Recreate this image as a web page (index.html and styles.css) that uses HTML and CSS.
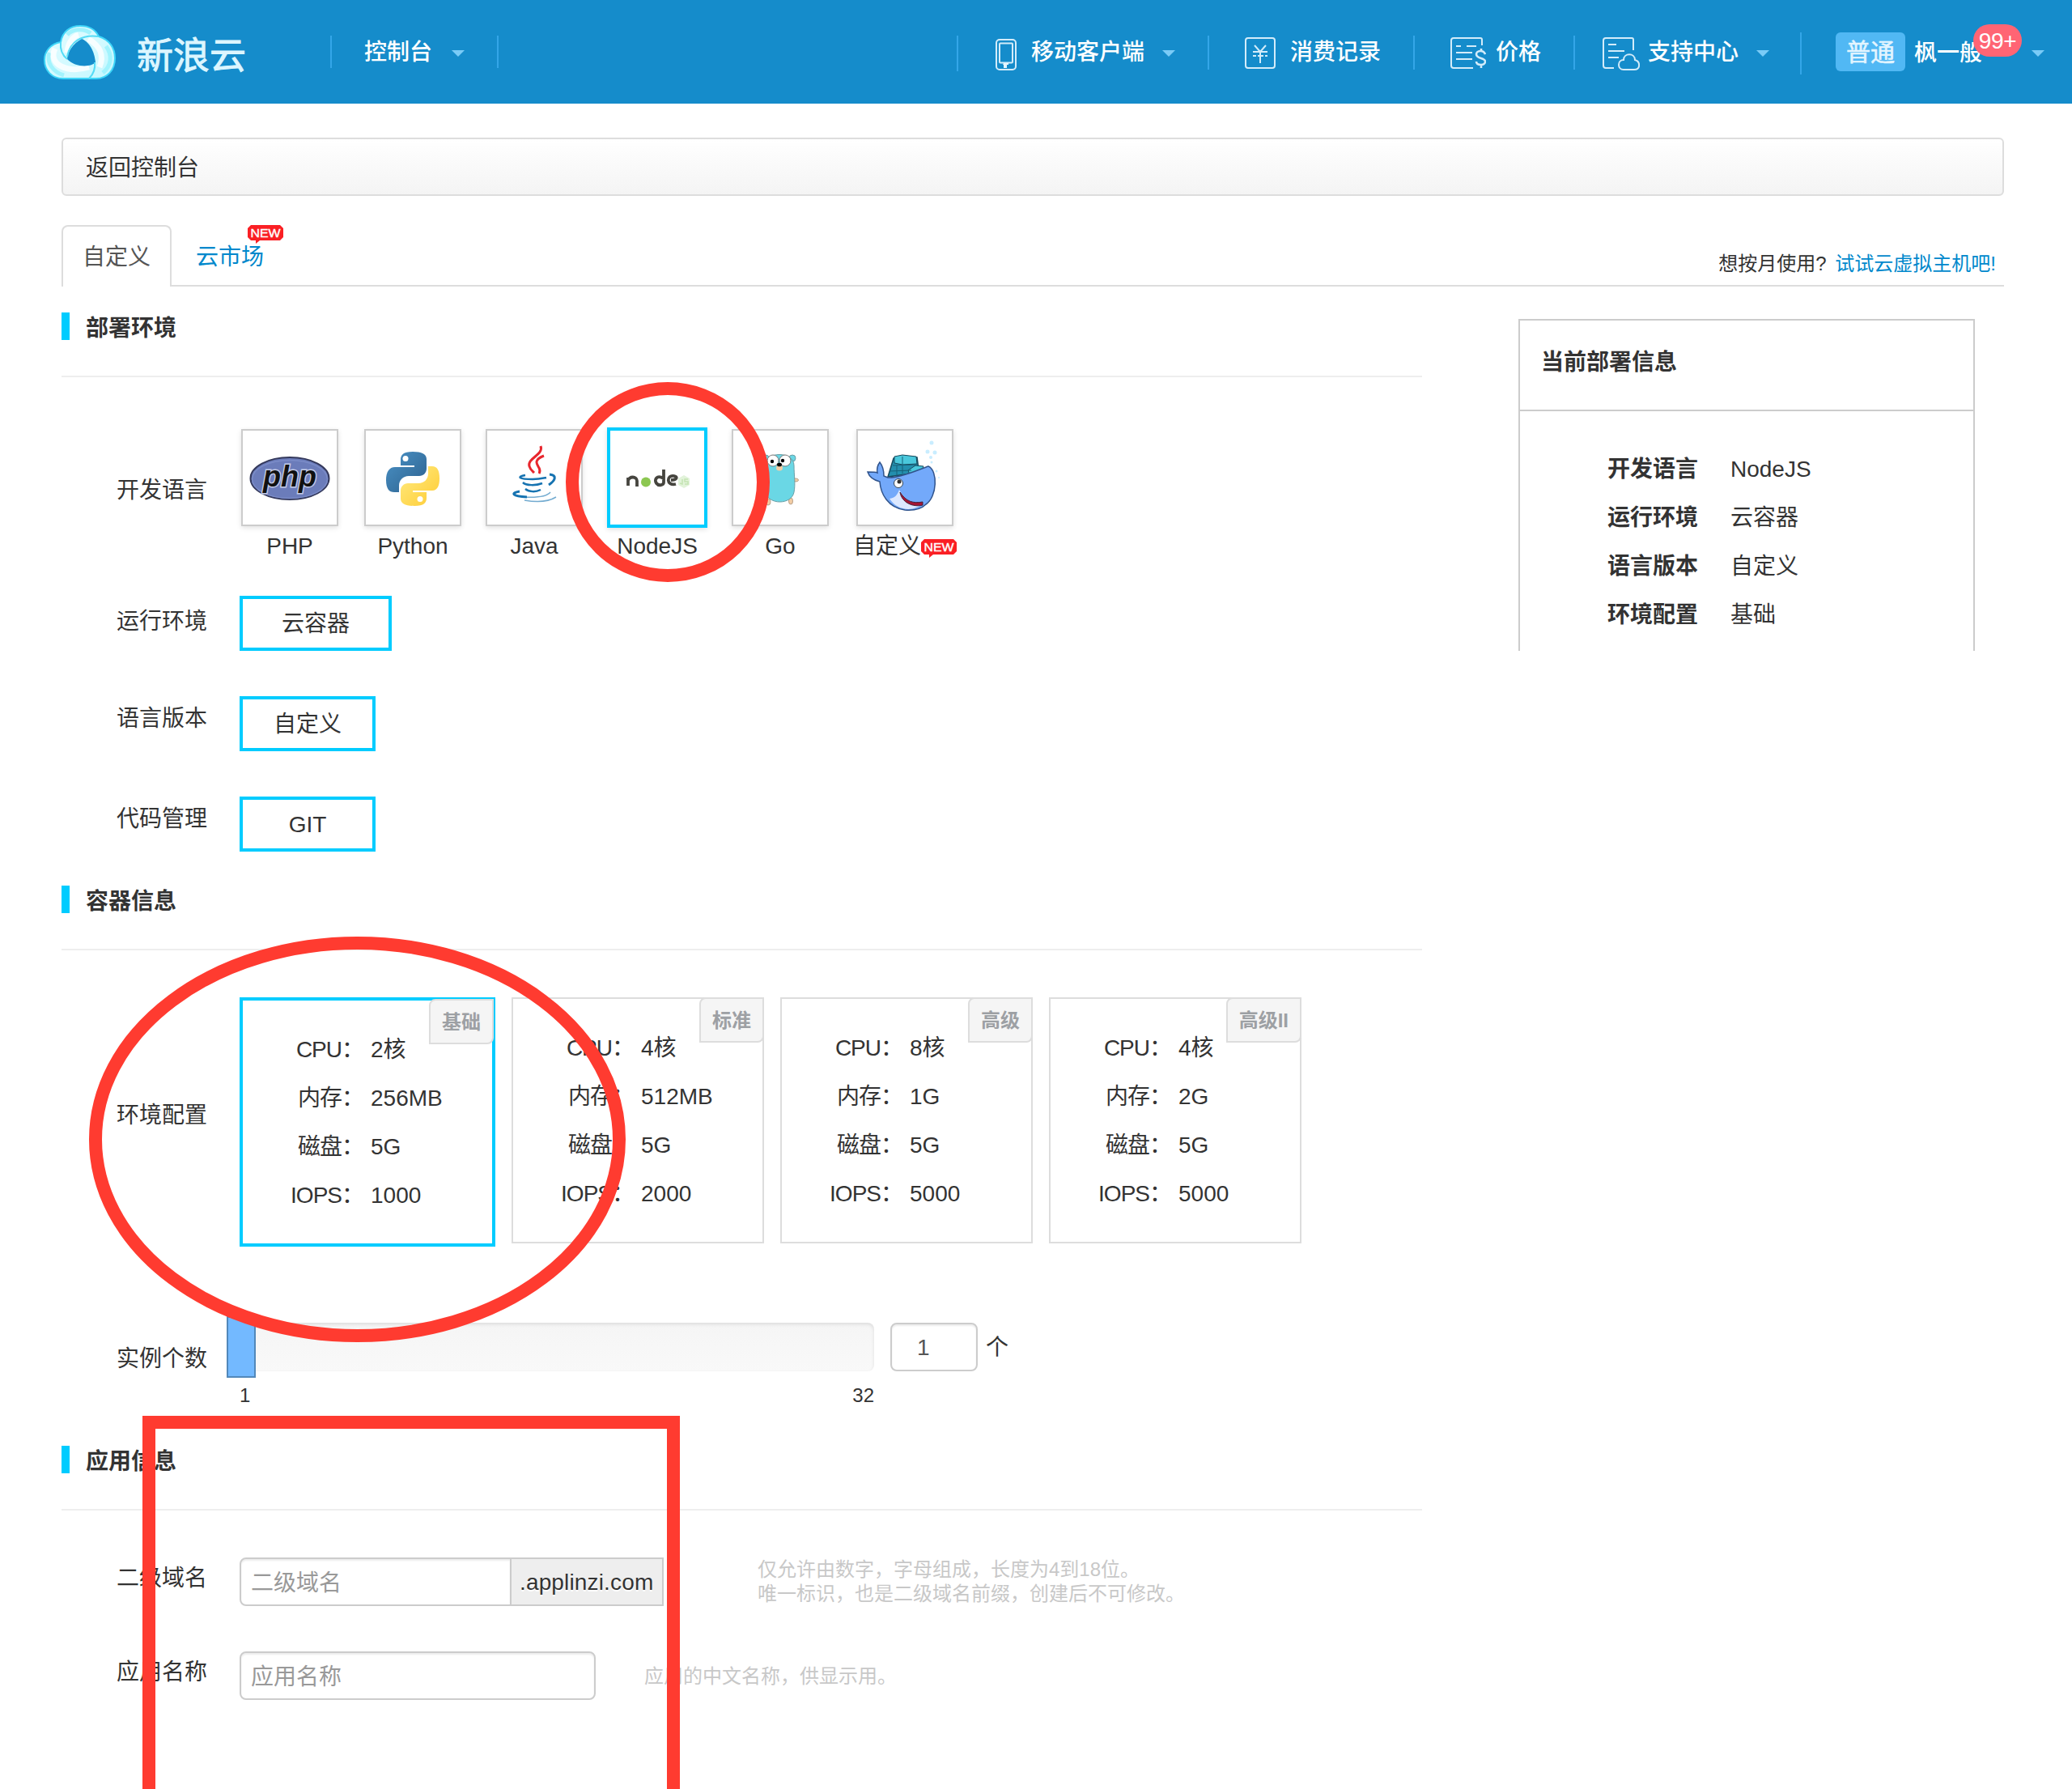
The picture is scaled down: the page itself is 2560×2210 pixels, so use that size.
FILE: index.html
```html
<!DOCTYPE html>
<html lang="zh-CN">
<head>
<meta charset="utf-8">
<title>新浪云</title>
<link rel="stylesheet" href="styles.css">
</head>
<body>
<header class="topbar">
  <a class="brand">
    <svg class="brand-mark" width="96" height="76" viewBox="0 0 96 76">
      <defs>
        <linearGradient id="cloud" x1="0" y1="0" x2="1" y2="1"><stop offset="0" stop-color="#e4fcff"/><stop offset="1" stop-color="#c4f8ff"/></linearGradient>
      </defs>
      <path d="M24 25C26 12 36 5 48 5s19 5 23 13c13 4 20 14 20 27 0 15-10 25-23 25H27C13 70 4 60 4 47c0-11 8-20 20-22z" fill="url(#cloud)" stroke="#3fd6f8" stroke-width="2"/>
      <path d="M10 38c-4 12 4 24 18 28M32 16c6-7 20-9 29-2M80 30c8 11 7 24-4 33" fill="none" stroke="#a2f3fd" stroke-width="5"/>
      <path d="M17 33c-9 19 14 31 42 23M32 38c1-12 7-20 14-22M58 21c15 9 20 20 14 35" fill="none" stroke="#fff" stroke-width="7" opacity=".8"/>
      <path d="M50 21c7 3 15 11 17 29-5 6-25 7-35-4 0-9 8-20 18-25z" fill="#158ccb"/>
      <path d="M24 25c-1 10 3 17 8 21M32 43c3-19 19-28 39-25M66 50c1 8-2 15-7 20" fill="none" stroke="#55dcf6" stroke-width="2"/>
    </svg>
    <span class="brand-name">新浪云</span>
  </a>
  <nav class="nav-left"><span>控制台</span><i class="caret"></i></nav>
  <nav class="nav-right">
    <a class="item mobile">
      <svg width="26" height="40" viewBox="0 0 26 40"><g fill="none" stroke="#d3ecfa" stroke-width="2"><rect x="1" y="1" width="24" height="37" rx="4"/><rect x="5" y="5.500" width="16" height="24" rx="1"/></g><path d="M10 30h6v2h-2v4h-4v-4h-1z" fill="#e5f5ff"/></svg>
      <span>移动客户端</span><i class="caret"></i>
    </a>
    <a class="item bill">
      <svg width="38" height="40" viewBox="0 0 38 40"><g fill="none" stroke="#d3ecfa" stroke-width="2"><rect x="1" y="1" width="36" height="37" rx="3"/><path d="M12 10l7 8 7-8M10 18h18M10 23h4m2 0h7m2 0h3M19 18v14"/></g></svg>
      <span>消费记录</span>
    </a>
    <a class="item price">
      <svg width="44" height="40" viewBox="0 0 44 40"><g fill="none" stroke="#d3ecfa" stroke-width="2"><path d="M28 38H4a3 3 0 0 1-3-3V4a3 3 0 0 1 3-3h33a2 2 0 0 1 2 2v7M7 11h6M20 11h12M7 19h20M7 27h20"/><path stroke-width="2.600" d="M43 21c-1-3-4-4-6-4-3 0-5 2-5 4 0 6 11 4 11 9 0 3-3 4-5 4-3 0-6-1-6-4M38 14v4M38 34v4"/></g></svg>
      <span>价格</span>
    </a>
    <a class="item support">
      <svg width="46" height="42" viewBox="0 0 46 42"><g fill="none" stroke="#d3ecfa" stroke-width="2"><path d="M14 38H4a3 3 0 0 1-3-3V4a3 3 0 0 1 3-3h32a2 2 0 0 1 2 2v13M7 9h10M7 17h20M7 25h13"/><path d="M26 40c-8 0-8-12 0-12 0-9 14-9 14 0 7 2 7 12-1 12z"/></g></svg>
      <span>支持中心</span><i class="caret"></i>
    </a>
    <a class="item user">
      <b class="level">普通</b><span class="name">枫一般<em class="count">99+</em></span><i class="caret"></i>
    </a>
  </nav>
</header>

<main class="page">
  <div class="backbar">返回控制台</div>
  <div class="tabs">
    <a class="tab active">自定义</a>
    <a class="tab">云市场<svg class="new" width="44" height="24" viewBox="0 0 44 24"><path class="bubble" d="M4 0h36l4 4v11l-4 4H15l-5 4v-4H4l-4-4V4z"/><text x="3.500" y="15" textLength="37" lengthAdjust="spacingAndGlyphs">NEW</text></svg></a>
    <p class="tip">想按月使用? <a>试试云虚拟主机吧!</a></p>
  </div>

  <div class="columns">
    <div class="form">
      <section class="deploy">
        <h2>部署环境</h2>
        <div class="row langs">
          <label>开发语言</label>
          <div class="lang-list">
            <div class="lang php"><div class="pic"><svg width="116" height="116" viewBox="0 0 116 116"><ellipse cx="58" cy="59" rx="48.500" ry="26" fill="#6b7cba" stroke="#34395c" stroke-width="2"/><ellipse cx="58" cy="60" rx="46.500" ry="23.500" fill="none" stroke="#7b8cc8" stroke-width="1.500"/><text class="php-word" x="25" y="69" textLength="66" lengthAdjust="spacingAndGlyphs">php</text></svg></div><span>PHP</span></div>
            <div class="lang python"><div class="pic"><svg width="116" height="116" viewBox="0 0 116 116"><defs><linearGradient id="pb" x2="1" y2="1"><stop stop-color="#4b93c7"/><stop offset="1" stop-color="#2b5f8c"/></linearGradient><linearGradient id="py" x2="1" y2="1"><stop stop-color="#ffec83"/><stop offset="1" stop-color="#ffcb32"/></linearGradient></defs><path fill="url(#pb)" d="M58 26c-12 0-15 4-15 10v7h17v2H36c-7 0-11 6-11 16 0 11 4 15 10 15h6v-8c0-7 5-12 12-12h13c5 0 9-4 9-9V35c0-6-6-9-17-9z"/><path fill="url(#py)" d="M60 93c12 0 15-4 15-10v-7H58v-2h24c7 0 9-7 9-15 0-10-3-15-9-15h-5v9c0 7-5 12-12 12H52c-5 0-9 4-9 9v10c0 6 6 9 17 9z"/><circle cx="49" cy="34.500" r="3.500" fill="#fff"/><circle cx="67" cy="84.500" r="3.500" fill="#fff"/></svg></div><span>Python</span></div>
            <div class="lang java"><div class="pic"><svg width="116" height="116" viewBox="0 0 116 116"><g fill="none" stroke="#e8262d"><path stroke-width="3" d="M66 19c4 11-17 15-14 25 1 4 4 6 6 8"/><path stroke-width="3" d="M70 31c-13 5-9 10-6 15 2 4 1 5 0 7"/></g><g fill="none" stroke="#1673b1"><path stroke-width="2.500" d="M47 55c-11 2-8 5 9 5 8 0 12-1 17-2M44 64c4 4 16 4 24 1M47 72c5 4 13 4 19 1"/><path stroke-width="3" d="M77 54c9 1 8 7-1 13"/><path stroke-width="3" d="M40 75c-12 2-9 6 9 7"/><path stroke-width="1.500" opacity=".6" d="M45 82c18 1 29-1 33-6M46 86c17 3 31 1 39-4"/></g></svg></div><span>Java</span></div>
            <div class="lang node selected"><div class="pic"><svg width="116" height="116" viewBox="0 2 116 116"><g fill="none" stroke="#46453f" stroke-width="3.800"><path d="M22 70V60M22 64c1-6 11-6 11 0v7M66 61c-9-5-12 2-9 6 3 4 9 2 9-1V50M81 68c-12 3-12-12-2-10 5 1 3 5-4 5"/></g><circle cx="44" cy="65.500" r="6" fill="#8cc751"/><path d="M91 57l7 4v8l-7 4-7-4v-8z" fill="#e2f3da"/><path d="M89 62v6l-3-1M96 62h-4v3h4v3h-4" fill="none" stroke="#c4e4b2" stroke-width="1.500"/></svg></div><span>NodeJS</span></div>
            <div class="lang go"><div class="pic"><svg width="116" height="116" viewBox="0 0 116 116"><g fill="#f3cda5" stroke="#b8a18a"><ellipse cx="43" cy="88" rx="3" ry="4"/><ellipse cx="71" cy="87" rx="2.500" ry="4"/><ellipse cx="77" cy="61" rx="3.500" ry="2"/></g><g fill="#6ad7e5" stroke="#6a9fa6"><circle cx="40" cy="34" r="4"/><circle cx="73" cy="34" r="4"/><path d="M39 43c0-18 36-18 36 0 0 12 2 23 0 33-3 16-32 16-35 0-2-10-1-21-1-33z"/></g><g fill="#fff" stroke="#777"><circle cx="49" cy="37" r="7"/><circle cx="64" cy="37" r="7"/></g><circle cx="48" cy="38" r="2.200"/><circle cx="61" cy="37" r="2.200"/><ellipse cx="57" cy="46" rx="4" ry="3.500" fill="#f3cda5"/><ellipse cx="57" cy="42" rx="3" ry="2.300"/></svg></div><span>Go</span></div>
            <div class="lang custom"><div class="pic"><svg width="116" height="116" viewBox="0 0 116 116"><path d="M37 57l7-23 11-3 18 2 2 15-9 5z" fill="#238fae" stroke="#17495c" stroke-width="1.500"/><path d="M45 32l10-2 17 2 1 9-18 1-10-2zM62 49l9-6 10 1-2 5-15 5z" fill="#4ac8dc" stroke="#17495c"/><path d="M55 32v21M43 43l30-1M48 43v13M39 50l27-1" stroke="#17617a" fill="none"/><path d="M37 58c15 1 38-10 50-14 12 5 11 38-3 47-5 5-14 8-26 7-21-3-30-20-31-35-8-2-13-6-15-12 5 0 10 0 12 1-1-5 0-9 3-13 4 5 5 11 5 17z" fill="#73a9fa" stroke="#31548c" stroke-width="1.500"/><path d="M39 84c7-1 10-5 12-11 6 11 13 17 29 17-10 10-31 10-41-6z" fill="#dce8ff"/><path d="M52 76c8 12 16 14 28 12v4c-12 3-26-3-28-16z" fill="#a51434" stroke="#43213a"/><ellipse cx="50" cy="65" rx="5.500" ry="5.500" fill="#fff" stroke="#345"/><circle cx="51" cy="63" r="2.500" fill="#333"/><g fill="#c9edff"><circle cx="91" cy="15" r="2.500"/><circle cx="86" cy="26" r="2.500"/><circle cx="95" cy="27" r="2.500"/><circle cx="90" cy="33" r="2"/><circle cx="91" cy="39" r="1.500"/><circle cx="97" cy="50" r="1.500"/><circle cx="100" cy="58" r="1"/></g></svg></div><span>自定义<svg class="new" width="44" height="24" viewBox="0 0 44 24"><path class="bubble" d="M4 0h36l4 4v11l-4 4H15l-5 4v-4H4l-4-4V4z"/><text x="3.500" y="15" textLength="37" lengthAdjust="spacingAndGlyphs">NEW</text></svg></span></div>
          </div>
        </div>
        <div class="row runtime"><label>运行环境</label><button class="wide">云容器</button></div>
        <div class="row version"><label>语言版本</label><button>自定义</button></div>
        <div class="row code"><label>代码管理</label><button>GIT</button></div>
      </section>

      <section class="container-info">
        <h2>容器信息</h2>
        <div class="row plans">
          <label>环境配置</label>
          <div class="plan-list">
            <div class="plan selected"><b class="tag">基础</b><dl><dt>CPU：</dt><dd>2核</dd><dt>内存：</dt><dd>256MB</dd><dt>磁盘：</dt><dd>5G</dd><dt>IOPS：</dt><dd>1000</dd></dl></div>
            <div class="plan"><b class="tag">标准</b><dl><dt>CPU：</dt><dd>4核</dd><dt>内存：</dt><dd>512MB</dd><dt>磁盘：</dt><dd>5G</dd><dt>IOPS：</dt><dd>2000</dd></dl></div>
            <div class="plan"><b class="tag">高级</b><dl><dt>CPU：</dt><dd>8核</dd><dt>内存：</dt><dd>1G</dd><dt>磁盘：</dt><dd>5G</dd><dt>IOPS：</dt><dd>5000</dd></dl></div>
            <div class="plan"><b class="tag">高级II</b><dl><dt>CPU：</dt><dd>4核</dd><dt>内存：</dt><dd>2G</dd><dt>磁盘：</dt><dd>5G</dd><dt>IOPS：</dt><dd>5000</dd></dl></div>
          </div>
        </div>
        <div class="row count-row">
          <label>实例个数</label>
          <div class="slider"><div class="track"><i class="handle"></i></div><div class="scale"><span>1</span><span>32</span></div></div>
          <div class="field qty">1</div><span class="unit">个</span>
        </div>
      </section>

      <section class="app-info">
        <h2>应用信息</h2>
        <div class="row domain"><label>二级域名</label><div class="field domain-field">二级域名</div><div class="addon">.applinzi.com</div><p class="help">仅允许由数字，字母组成，长度为4到18位。<br>唯一标识，也是二级域名前缀，创建后不可修改。</p></div>
        <div class="row appname"><label>应用名称</label><div class="field name-field">应用名称</div><p class="help">应用的中文名称，供显示用。</p></div>
      </section>
    </div>

    <aside class="summary">
      <h3>当前部署信息</h3>
      <dl><dt>开发语言</dt><dd>NodeJS</dd><dt>运行环境</dt><dd>云容器</dd><dt>语言版本</dt><dd>自定义</dd><dt>环境配置</dt><dd>基础</dd></dl>
    </aside>
  </div>
</main>

<svg class="marks" width="2560" height="2210" viewBox="0 0 2560 2210">
  <ellipse cx="825" cy="595.500" rx="118" ry="115.500"/>
  <ellipse cx="441.500" cy="1407.500" rx="323.500" ry="242.500"/>
  <rect x="184" y="1757" width="648" height="600"/>
</svg>
</body>
</html>
```
FILE: styles.css
```css
* { box-sizing: border-box; }
html, body { margin: 0; padding: 0; }
body {
  position: relative;
  width: 2560px;
  height: 2210px;
  overflow: hidden;
  background: #fff;
  color: #333;
  font: 28px/40px "Liberation Sans", "Noto Sans CJK SC", sans-serif;
}
h2, h3, p, dl, dd { margin: 0; }
svg { display: block; flex: none; }

/* Top bar */
.topbar { display: flex; height: 128px; background: #158ccb; color: #fff; font-weight: 500; }
.brand { display: flex; width: 408px; padding: 27px 0 0 51px; }
.brand-name { margin: 5px 0 0 22px; font: 45px/68px "Noto Sans CJK SC", sans-serif; color: #dcf6ff; white-space: nowrap; -webkit-text-stroke: 1px #dcf6ff; }
.caret { width: 16px; height: 8px; margin-top: 18px; background: #7acbf7; clip-path: polygon(0 0, 100% 0, 50% 100%); }
.nav-left {
  display: flex;
  width: 208px;
  height: 40px;
  margin-top: 44px;
  padding-left: 40px;
  border: solid #34a6e8;
  border-width: 0 2px;
}
.nav-left .caret { margin-left: 24px; }
.nav-right { display: flex; margin-left: auto; padding-right: 34px; }
.nav-left span, .item > span { white-space: nowrap; line-height: 42px; }
.item { display: flex; height: 42px; margin-top: 44px; border-left: 2px solid #34a6e8; }
.item svg { margin: 2px 18px 0 0; }
.mobile { width: 310px; padding-left: 46px; height: 44px; }
.mobile svg { margin-top: 4px; }
.item .caret { margin-left: 22px; }
.bill { width: 254px; padding-left: 44px; }
.price { width: 198px; padding-left: 44px; }
.price svg { margin-right: 12px; }
.support { width: 280px; padding-left: 34px; }
.support svg { margin-right: 10px; }
.user { height: 52px; margin-top: 40px; padding-left: 42px; }
.level { width: 86px; height: 48px; border-radius: 6px; background: #51b8f4; color: #e3f5ff; font: 30px/45px "Noto Sans CJK SC", sans-serif; text-align: center; -webkit-text-stroke: .6px #e3f5ff; }
.name { position: relative; width: 84px; margin: 5px 0 0 11px; }
.count {
  position: absolute;
  left: 73px;
  top: -15px;
  width: 60px;
  height: 40px;
  border-radius: 20px;
  background: #ff6574;
  font-style: normal;
  font-weight: 400;
  line-height: 42px;
  letter-spacing: -.3px;
  text-align: center;
}
.user .caret { margin: 22px 0 0 61px; }

/* Back link and tabs */
.page { padding: 42px 84px 0 76px; }
.backbar { height: 72px; padding: 16px 0 0 28px; border: 2px solid #ddd; border-radius: 6px; background: linear-gradient(#fff, #f4f4f4); text-shadow: 0 2px 0 #fff; }
.tabs { display: flex; height: 76px; margin-top: 36px; border-bottom: 2px solid #ddd; }
.tab { position: relative; padding: 20px 0 0 30px; color: #08c; }
.tab.active { width: 136px; height: 76px; padding: 18px 0 0 24px; border: 2px solid #ddd; border-bottom: 0; border-radius: 8px 8px 0 0; background: #fff; color: #555; }
.tab .new { position: absolute; left: 94px; top: 0; }
.new .bubble { fill: #fa1f24; }
.new text { font: 15px "Liberation Sans", sans-serif; fill: #fff; stroke: #fff; stroke-width: .4px; }
.tip { margin: 28px 10px 0 auto; font-size: 24px; }
.tip a { margin-left: 4px; color: #08c; }

/* Form sections */
.columns { display: flex; align-items: flex-start; }
.form { width: 1681px; }
section { padding-top: 32px; }
.deploy { height: 708px; }
.container-info { height: 692px; }
h2 { height: 80px; padding-bottom: 40px; border-bottom: 2px solid #eee; font-size: 28px; line-height: 40px; }
h2::before { content: ""; display: block; float: left; width: 10px; height: 34px; margin-right: 20px; background: #0cf; }
.row { display: flex; padding-left: 68px; }
label { width: 152px; flex: none; }
.langs { height: 206px; padding-top: 64px; }
.langs label { width: 154px; padding-top: 56px; }
.lang-list { display: flex; }
.lang { display: flex; flex-direction: column; align-items: center; width: 120px; margin-right: 30px; white-space: nowrap; }
.pic { width: 120px; height: 120px; border: 2px solid #ccc; box-shadow: 0 2px 6px rgba(0, 0, 0, .12); }
.lang > span { margin-top: 5px; }
.php { margin-right: 32px; }
.go { margin-right: 34px; }
.node { width: 124px; }
.node .pic { width: 124px; height: 124px; margin: -2px 0; border: 4px solid #0cf; }
.custom > span { display: flex; align-self: flex-start; margin-left: -4px; }
.custom .new { margin: 11px 0 0 0; }
.php-word { font: italic bold 37px "Liberation Sans", sans-serif; fill: #111; stroke: #c4cce8; stroke-width: 3px; paint-order: stroke; }
.runtime { margin-top: 64px; }
.runtime, .version, .code { height: 68px; }
.version, .code { margin-top: 56px; }
.runtime label { padding-top: 12px; }
.version label, .code label { padding-top: 8px; }
button { width: 168px; height: 68px; padding: 1px 0 0; border: 4px solid #0cf; background: #fff; color: #333; font: inherit; }
button.wide { width: 188px; }

/* Plans */
.plans { padding-top: 58px; height: 460px; }
.plans label { padding-top: 126px; }
.plan-list { display: flex; align-items: flex-start; gap: 20px; }
.plan { position: relative; width: 312px; height: 304px; padding: 41px 0 0; border: 2px solid #ddd; }
.plan.selected { width: 316px; height: 308px; border: 4px solid #0cf; }
.plan dl { display: grid; grid-template-columns: 149px auto; column-gap: 9px; grid-auto-rows: 60px; }
.plan dt { text-align: right; white-space: nowrap; letter-spacing: -1px; }
.tag { position: absolute; right: -2px; top: -2px; height: 56px; padding: 7px 14px; border: 2px solid #ddd; border-radius: 8px 0; background: #f5f5f5; color: #9da0a4; font-size: 24px; line-height: 40px; }
.plan.selected .tag { right: -2px; top: -2px; }
.count-row label { width: 156px; padding-top: 25px; }
.slider { width: 780px; }
.track { position: relative; height: 60px; border-radius: 8px; background: linear-gradient(#f5f5f5, #f9f9f9); box-shadow: inset 0 2px 4px rgba(0, 0, 0, .1); }
.handle { position: absolute; left: -20px; top: -8px; width: 36px; height: 76px; border: 2px solid #5288ba; background: #73b9ff; }
.scale { display: flex; justify-content: space-between; margin-top: 10px; font-size: 24px; }
.scale span:first-child { margin-left: -4px; }
.field { height: 60px; padding: 9px 12px; border: 2px solid #ccc; border-radius: 8px; background: #fff; box-shadow: inset 0 2px 2px rgba(0, 0, 0, .075); color: #999; }
.qty { width: 108px; margin-left: 20px; padding-left: 31px; color: #555; }
.unit { margin: 11px 0 0 10px; }

/* Application */
.domain { height: 116px; margin-top: 58px; }
.domain label, .appname label { padding-top: 6px; }
.domain-field { width: 336px; border-radius: 8px 0 0 8px; }
.domain-field, .name-field { line-height: 42px; }
.addon { width: 190px; height: 60px; margin-left: -2px; padding: 9px 0 0 10px; border: 2px solid #ccc; background: #eee; text-shadow: 0 2px 0 #fff; letter-spacing: .15px; }
.help { margin: 0 0 0 116px; color: #c8c8c8; font-size: 24px; line-height: 30px; white-space: nowrap; }
.name-field { width: 440px; }
.appname .help { margin: 16px 0 0 60px; }

/* Summary */
.summary { width: 564px; height: 410px; margin: 40px 0 0 119px; border: 2px solid #ccc; border-bottom: 0; }
.summary h3 { height: 112px; padding: 32px 0 0 26px; border-bottom: 2px solid #ccc; font-size: 28px; }
.summary dl { display: grid; grid-template-columns: 152px auto; grid-auto-rows: 60px; padding: 52px 0 0 108px; }
.summary dt { font-weight: bold; }

.marks { position: absolute; inset: 0; fill: none; stroke: #ff3b30; stroke-width: 16px; }
```
